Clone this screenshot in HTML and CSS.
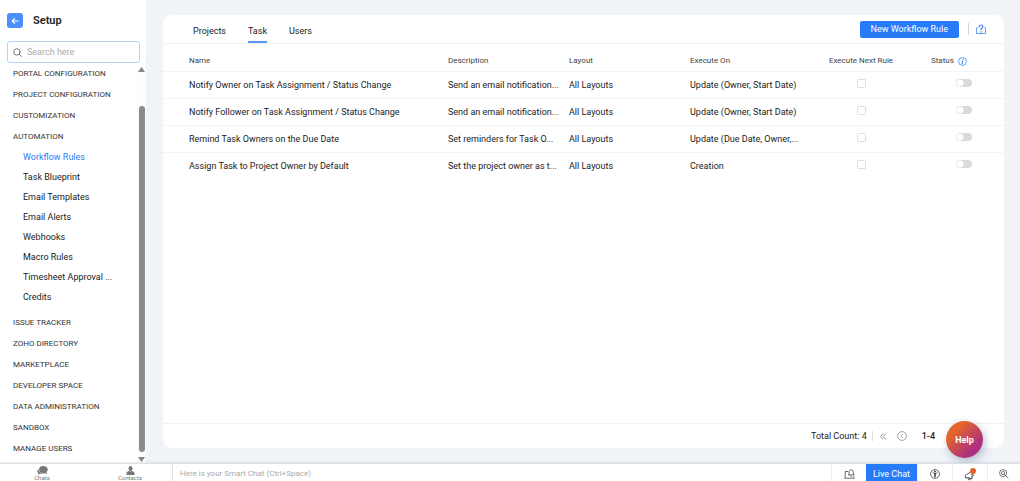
FILE: index.html
```html
<!DOCTYPE html>
<html lang="en">
<head>
<meta charset="utf-8">
<title>Setup - Workflow Rules</title>
<link rel="stylesheet" href="styles.css">
</head>
<body>
<div class="app">
  <aside class="sidebar">
    <header class="side-head">
      <button class="back" type="button" aria-label="Back">
        <svg width="8" height="8" viewBox="0 0 8 8" fill="none" stroke="currentColor" stroke-width="1.2" stroke-linecap="round" stroke-linejoin="round"><path d="M7 4H1.2M3.6 1.6L1.2 4l2.4 2.4"/></svg>
      </button>
      <h1 class="title">Setup</h1>
    </header>
    <label class="search">
      <svg width="9" height="9" viewBox="0 0 9 9" fill="none" stroke="currentColor" stroke-linecap="round"><circle cx="3.9" cy="3.9" r="3.2"/><path d="M6.3 6.3L8.4 8.4"/></svg>
      <input class="search-input" type="text" placeholder="Search here" aria-label="Search here">
    </label>
    <div class="side-body">
      <nav class="nav">
        <a class="section" href="#">PORTAL CONFIGURATION</a>
        <a class="section" href="#">PROJECT CONFIGURATION</a>
        <a class="section" href="#">CUSTOMIZATION</a>
        <a class="section" href="#">AUTOMATION</a>
        <div class="sub">
          <a class="item active" href="#">Workflow Rules</a>
          <a class="item" href="#">Task Blueprint</a>
          <a class="item" href="#">Email Templates</a>
          <a class="item" href="#">Email Alerts</a>
          <a class="item" href="#">Webhooks</a>
          <a class="item" href="#">Macro Rules</a>
          <a class="item" href="#">Timesheet Approval ...</a>
          <a class="item" href="#">Credits</a>
        </div>
        <a class="section" href="#">ISSUE TRACKER</a>
        <a class="section" href="#">ZOHO DIRECTORY</a>
        <a class="section" href="#">MARKETPLACE</a>
        <a class="section" href="#">DEVELOPER SPACE</a>
        <a class="section" href="#">DATA ADMINISTRATION</a>
        <a class="section" href="#">SANDBOX</a>
        <a class="section" href="#">MANAGE USERS</a>
      </nav>
      <div class="scrollbar" aria-hidden="true">
        <svg width="7" height="5" viewBox="0 0 7 5" fill="currentColor"><path d="M3.5 0L7 5H0z"/></svg>
        <span class="thumb"></span>
        <svg width="7" height="5" viewBox="0 0 7 5" fill="currentColor"><path d="M3.5 5L0 0h7z"/></svg>
      </div>
    </div>
  </aside>

  <main class="main">
    <section class="card">
      <header class="card-head">
        <nav class="tabs">
          <a class="tab" href="#">Projects</a>
          <a class="tab current" href="#">Task</a>
          <a class="tab" href="#">Users</a>
        </nav>
        <button class="primary" type="button">New Workflow Rule</button>
        <span class="rule"></span>
        <button class="icon-btn guide" type="button" aria-label="Guide">
          <svg width="10" height="11" viewBox="0 0 10 11" fill="none" stroke="currentColor" stroke-width=".8" stroke-linejoin="round" stroke-linecap="round"><path d="M1.800 3.500L.5 4v5.500h3.700L5 10l.8-.5h3.700V4l-1.300-.5"/><path d="M5 8.500v1.300" /><path stroke-width="1.200" d="M3.200 2.700C3.200.4 6.800.4 6.800 2.700 6.800 4 5 4.100 5 5.500M5 7.200v.1"/></svg>
        </button>
      </header>

      <table class="rules">
        <colgroup><col><col class="c-desc"><col class="c-layout"><col class="c-exec"><col class="c-next"><col class="c-status"></colgroup>
        <thead>
          <tr><th>Name</th><th>Description</th><th>Layout</th><th>Execute On</th><th class="center">Execute Next Rule</th>
          <th class="status-head"><span class="status-label">Status
            <svg width="9" height="9" viewBox="0 0 9 9" fill="none" stroke="#3b86f6"><circle cx="4.500" cy="4.500" r="3.900" stroke-width=".8"/><path d="M4.700 3.900L4.200 6.800M5 2.200v.3" stroke-width="1.100" stroke-linecap="round"/></svg></span></th></tr>
        </thead>
        <tbody>
          <tr><td>Notify Owner on Task Assignment / Status Change</td><td>Send an email notification...</td><td>All Layouts</td><td>Update (Owner, Start Date)</td><td class="center"><input class="check" type="checkbox" aria-label="Execute next rule"></td><td class="status"><input class="switch" type="checkbox" role="switch" aria-label="Status"></td></tr>
          <tr><td>Notify Follower on Task Assignment / Status Change</td><td>Send an email notification...</td><td>All Layouts</td><td>Update (Owner, Start Date)</td><td class="center"><input class="check" type="checkbox" aria-label="Execute next rule"></td><td class="status"><input class="switch" type="checkbox" role="switch" aria-label="Status"></td></tr>
          <tr><td>Remind Task Owners on the Due Date</td><td>Set reminders for Task O...</td><td>All Layouts</td><td>Update (Due Date, Owner,...</td><td class="center"><input class="check" type="checkbox" aria-label="Execute next rule"></td><td class="status"><input class="switch" type="checkbox" role="switch" aria-label="Status"></td></tr>
          <tr><td>Assign Task to Project Owner by Default</td><td>Set the project owner as t...</td><td>All Layouts</td><td>Creation</td><td class="center"><input class="check" type="checkbox" aria-label="Execute next rule"></td><td class="status"><input class="switch" type="checkbox" role="switch" aria-label="Status"></td></tr>
        </tbody>
      </table>

      <footer class="pager">
        <span>Total Count: 4</span>
        <span class="pager-rule"></span>
        <button class="icon-btn first" type="button" aria-label="First page">
          <svg width="6" height="7" viewBox="0 0 6 7" fill="none" stroke="currentColor" stroke-width=".9"><path d="M3 .5L.7 3.500 3 6.500M5.600.5L3.300 3.500l2.300 3"/></svg>
        </button>
        <button class="icon-btn prev" type="button" aria-label="Previous page">
          <svg width="10" height="10" viewBox="0 0 10 10" fill="none" stroke="currentColor" stroke-width=".8"><circle cx="5" cy="5" r="4.400"/><path d="M5.700 3L3.900 5l1.800 2"/></svg>
        </button>
        <span class="range">1-4</span>
      </footer>
    </section>
    <button class="help" type="button">Help</button>
  </main>

  <footer class="bar">
    <div class="bar-left">
      <button class="dock" type="button">
        <svg width="11" height="9" viewBox="0 0 11 9" fill="currentColor"><path d="M6 0c2.800 0 4.800 1.500 4.800 3.600 0 1.200-.6 2-1.300 2.600l.5 1.900-2-.9C5 8 2 6.500 2 3.600 2 1.500 3.600 0 6 0z"/><path d="M1.500 3.200C0 4 0 6 1.200 7L1 8.800l1.800-1c1.200.2 2.200 0 2.900-.4C3.500 7.200 1.500 5.500 1.500 3.200z"/></svg>
        <span>Chats</span>
      </button>
      <button class="dock" type="button">
        <svg width="9" height="9" viewBox="0 0 9 9" fill="currentColor"><ellipse cx="4.500" cy="2.500" rx="2" ry="2.500"/><path d="M.5 9V7.300C.5 6 1.900 5.400 3.200 5.100c.8.600 1.800.600 2.600 0C7.100 5.400 8.500 6 8.500 7.300V9z"/></svg>
        <span>Contacts</span>
      </button>
    </div>
    <input class="chat" type="text" placeholder="Here is your Smart Chat (Ctrl+Space)" aria-label="Smart Chat">
    <div class="tools">
      <button class="tool" type="button" aria-label="Notifications">
        <svg width="11" height="10" viewBox="0 0 11 10" fill="none" stroke="currentColor" stroke-width=".8"><path d="M4 2.500H1.200v6.300M9.700 7.300v1.500M.3 9.200h10.400M5 6V3.200C5 .1 9.300.1 9.300 3.200V5l.9 1H4.200M6.500 7.300h1.300"/></svg>
      </button>
      <button class="live" type="button">Live Chat</button>
      <button class="tool" type="button" aria-label="Accessibility">
        <svg width="10" height="10" viewBox="0 0 10 10" fill="none" stroke="currentColor" stroke-width=".8"><circle cx="5" cy="5" r="4.400"/><circle cx="5" cy="2.400" r=".6" fill="currentColor"/><path d="M2.600 3.900L5 4.300l2.400-.4M5 4v2.200M4.500 4v4.300M5.500 4v4.300"/></svg>
      </button>
      <button class="tool announce" type="button" aria-label="Announcements">
        <svg width="12" height="13" viewBox="0 0 12 13" fill="none" stroke="currentColor" stroke-width=".9" stroke-linejoin="round"><path d="M1 7.700L8 3v8L4.500 9.500 1.600 10zM3.700 9.500L5 12l1.200-.6-.6-1.400M8.300 6c1.500.3 1.500 2 .3 2.500"/><circle cx="9" cy="3" r="3" fill="#e2622f" stroke="none"/></svg>
      </button>
      <button class="tool last" type="button" aria-label="Search">
        <svg width="10" height="10" viewBox="0 0 11 11" fill="none" stroke="currentColor" stroke-width=".8"><circle cx="4.500" cy="4.500" r="3.900"/><circle cx="4.500" cy="4.500" r="1.800"/><path d="M7.300 7.300l3 3M5.800 5.800L7 7"/></svg>
      </button>
    </div>
  </footer>
</div>
</body>
</html>
```
FILE: styles.css
```css
* { box-sizing: border-box; }

body {
  margin: 0;
  font-family: Roboto, "Open Sans", sans-serif;
  font-size: 9px;
  line-height: 12px;
  color: #222;
}

a { color: inherit; text-decoration: none; }
button, input { font: inherit; color: inherit; margin: 0; padding: 0; border: 0; background: none; }
svg { display: block; flex: none; }

.app {
  display: grid;
  grid-template-columns: 146px 1fr;
  grid-template-rows: minmax(0, 1fr) 18px;
  height: 100vh;
  background: #f0f3f8;
}

/* Sidebar */
.sidebar { display: flex; flex-direction: column; background: #fff; min-height: 0; }
.side-head { display: flex; align-items: center; gap: 10px; padding: 13px 7px 0; }
.back {
  display: flex; align-items: center; justify-content: center;
  width: 16px; height: 15px; border-radius: 3px; background: #4a8ffb; color: #fff;
}
.title { margin: 0; font-size: 11px; line-height: 15px; font-weight: 600; }
.search {
  display: flex; align-items: center; gap: 5px;
  height: 22px; margin: 13px 6px 0 7px; padding: 0 5px;
  border: 1px solid #b4d3f8; border-radius: 3px; color: #777;
}
.search-input { flex: 1; min-width: 0; outline: 0; }
.search-input::placeholder, .chat::placeholder { color: #aaa; opacity: 1; }
.side-body { display: flex; flex: 1; min-height: 0; }
.nav { display: flex; flex-direction: column; flex: 1; min-width: 0; overflow: hidden; }
.section { padding-left: 13px; font-size: 8px; line-height: 21px; color: #333; white-space: nowrap; }
.sub { display: flex; flex-direction: column; padding-bottom: 5px; }
.item { padding-left: 23px; line-height: 20px; white-space: nowrap; }
.item.active { color: #2a7cf7; }
.scrollbar {
  display: flex; flex-direction: column; align-items: center;
  width: 9px; padding: 4px 0 1px; color: #858585; background: #fcfcfc;
}
.thumb { flex: 1; width: 6px; margin: 34px 0 5px; border-radius: 3px; background: #8b8b8b; }

/* Card */
.main { position: relative; display: flex; padding: 15px 16px 15px 17px; min-width: 0; min-height: 0; }
.card { display: flex; flex-direction: column; flex: 1; min-width: 0; background: #fff; border-radius: 9px; }
.card-head { display: flex; align-items: center; height: 29px; padding: 0 18px 0 30px; border-bottom: 1px solid #f1f1f1; }
.tabs { display: flex; gap: 22px; flex: 1; align-self: stretch; }
.tab { padding-top: 4px; line-height: 24px; border-bottom: 2px solid transparent; }
.tab.current { border-color: #5595f9; }
.primary { height: 17px; padding: 0 11px; border-radius: 2px; background: #277bf9; color: #fff; }
.rule { width: 1px; height: 12px; margin: 0 7px 0 9px; background: #d3d8e0; }
.icon-btn { display: flex; align-items: center; justify-content: center; }
.guide { color: #3b86f6; }

.rules { width: 100%; border-collapse: collapse; table-layout: fixed; }
.rules th, .rules td { height: 27px; padding: 0; text-align: left; font-weight: 400; white-space: nowrap; border-bottom: 1px solid #f3f4f6; }
.rules th { padding-top: 8px; font-size: 8px; color: #444; }
.rules tbody tr:last-child td { border-bottom: 0; }
.rules th:first-child, .rules td:first-child { padding-left: 26px; }
.rules .center { text-align: center; }
.c-desc, .c-layout { width: 121px; }
.c-exec { width: 126px; }
.c-next { width: 90px; }
.c-status { width: 98px; }
.rules .status-head { padding-left: 25px; }
.status-label { display: flex; align-items: center; gap: 4px; }
.rules .status { padding: 0 0 4px 50px; }
.rules td.center { padding-bottom: 3px; }
.check, .switch { appearance: none; display: block; }
.check { width: 9px; height: 9px; margin: 0 auto; border: 1px solid #dedfe3; border-radius: 1px; background: #fff; }
.switch { width: 16px; height: 8px; border-radius: 4px; background: radial-gradient(circle at 4px 4px, #fff 3px, #dadada 4px); }

.pager {
  display: flex; align-items: center; height: 25px; margin-top: auto; padding-right: 69px;
  justify-content: flex-end; border-top: 1px solid #f1f1f1;
}
.pager-rule { width: 1px; height: 10px; margin: 0 7px 0 5px; background: #ddd; }
.first, .prev { color: #8d8d8d; }
.prev { margin-left: 11px; }
.range { margin-left: 15px; font-weight: 500; }

.help {
  position: absolute; right: 37px; bottom: 5px; width: 37px; height: 37px;
  border-radius: 50%; background: linear-gradient(135deg, #e2662a 25%, #ae2f7e 75%);
  box-shadow: 2px 3px 8px rgba(60, 80, 110, .35); color: #fff; font-weight: 700;
}

/* Bottom bar */
.bar {
  grid-column: 1 / -1; display: flex; min-width: 0;
  background: #fff; border-top: 1px solid #dcdfe3; box-shadow: 0 0 3px rgba(0, 0, 0, .15); z-index: 1;
}
.bar-left { display: flex; width: 173px; flex: none; border-right: 1px solid #e0e0e0; }
.dock { display: flex; flex: none; flex-direction: column; align-items: center; justify-content: flex-end; width: 84px; font-size: 6px; line-height: 6px; color: #777; }
.dock + .dock { margin-left: 4px; }
.chat { flex: 1; min-width: 0; padding: 3px 7px 0; outline: 0; font-size: 8px; }
.tools { display: flex; align-items: stretch; color: #444; }
.tool { display: flex; align-items: center; justify-content: center; width: 35px; padding-top: 3px; border-left: 1px solid #ececec; }
.tool.last { width: 33px; }
.live { width: 51px; padding-top: 2px; background: #277bf9; color: #fff; }
```
